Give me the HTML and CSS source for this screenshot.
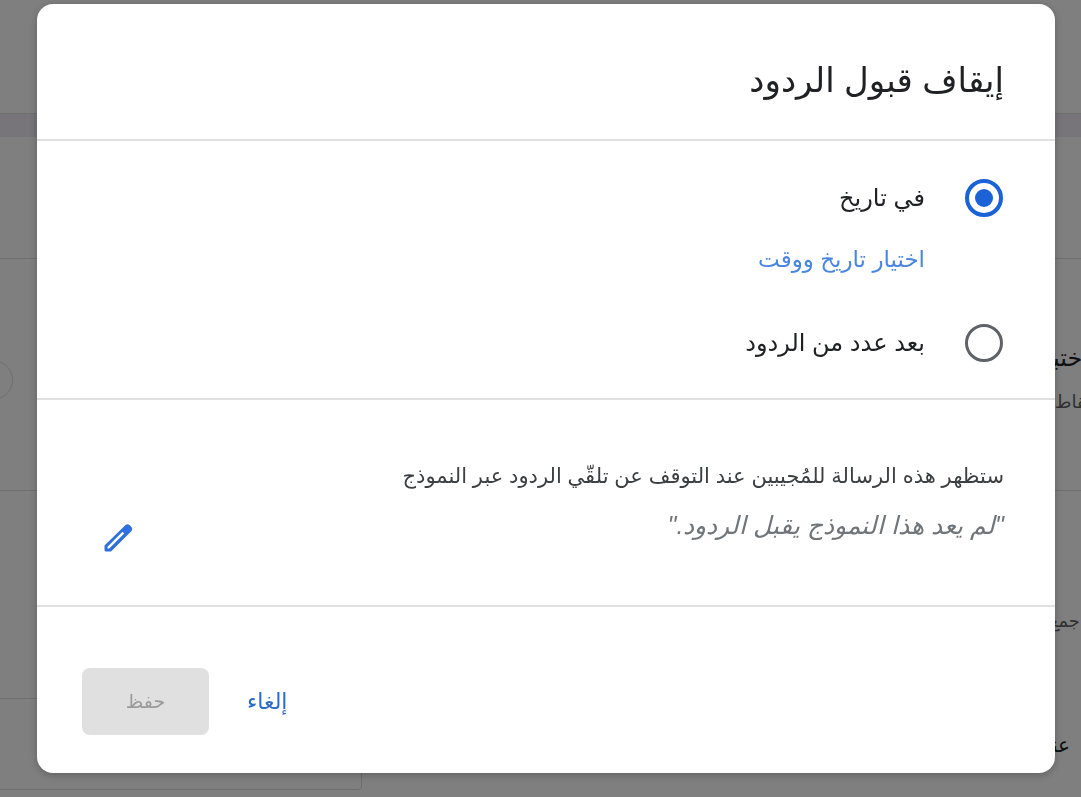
FILE: index.html
```html
<!DOCTYPE html>
<html lang="ar" dir="rtl">
  <head>
    <meta charset="UTF-8" />
    <title>إيقاف قبول الردود</title>
    <link rel="stylesheet" href="styles.css">
  </head>
  <body>
    <div class="page">
      <div class="page-top"></div>
      <div class="page-band"></div>
      <div class="page-section page-section-a"></div>
      <div class="page-section page-section-b">
        <div>
          <div class="page-label">اختبار</div>
          <div class="page-sub">نقاط</div>
        </div>
        <span class="page-circle"></span>
      </div>
      <div class="page-section page-section-c">
        <div class="page-sub">جمع</div>
      </div>
      <div class="page-section-d">
        <div class="page-title">عنوان</div>
        <div class="page-box"></div>
      </div>
    </div>

    <div class="overlay"></div>

    <div class="dialog" role="dialog">
      <div class="dialog-head">إيقاف قبول الردود</div>

      <div class="dialog-options">
        <div class="option">
          <span class="radio radio-on"></span>
          <span>في تاريخ</span>
        </div>
        <a class="pick-link">اختيار تاريخ ووقت</a>
        <div class="option option-last">
          <span class="radio"></span>
          <span>بعد عدد من الردود</span>
        </div>
      </div>

      <div class="dialog-message">
        <div class="message-text">
          <p class="message-note">ستظهر هذه الرسالة للمُجيبين عند التوقف عن تلقّي الردود عبر النموذج</p>
          <p class="message-quote">"لم يعد هذا النموذج يقبل الردود."</p>
        </div>
        <svg class="edit-icon" viewBox="0 0 30 30" width="30" height="30">
          <path fill-rule="evenodd" fill="#2f6fde" d="M3 28.5 Q1.5 28.5 1.5 27 V22.5 L22.5 2 Q24.5 0.5 26.5 2 L28.5 4 Q30 6 28.5 8 L8 28.5 Z M4.5 23.8 V25.5 H6.2 L21.2 10.5 L19.5 8.8 Z"/>
        </svg>
      </div>

      <div class="dialog-actions">
        <a class="cancel-btn">إلغاء</a>
        <button class="save-btn" disabled>حفظ</button>
      </div>
    </div>
  </body>
</html>
```

FILE: styles.css
```css
* {
  box-sizing: border-box;
}

html,
body {
  margin: 0;
  height: 100%;
  overflow: hidden;
}

body {
  font-family: 'Liberation Sans', 'DejaVu Sans', sans-serif;
  color: #202124;
  background-color: #fff;
}

.page {
  height: 797px;
  overflow: hidden;
}

.page-top {
  height: 113px;
}

.page-band {
  height: 24px;
  background-color: #eeeaf2;
  border-top: 1px solid #ddd;
}

.page-section {
  border-bottom: 1px solid #ddd;
}

.page-section-a {
  height: 122px;
}

.page-section-b {
  height: 232px;
  padding-top: 86px;
  display: flex;
  justify-content: space-between;
  align-items: flex-start;
}

.page-section-c {
  height: 207px;
  padding-top: 120px;
  border-bottom: none;
}

.page-section-d {
  height: 100px;
  display: flex;
  justify-content: space-between;
  align-items: flex-start;
}

.page-label {
  margin-right: -8px;
  font-size: 24px;
  line-height: 26px;
}

.page-sub {
  margin-top: 21px;
  margin-right: -10px;
  font-size: 18px;
  line-height: 20px;
  color: #5f6368;
}

.page-section-c .page-sub {
  margin: 0 1px 0 0;
}

.page-title {
  margin: 35px 11px 0 0;
  font-size: 20px;
  line-height: 24px;
}

.page-circle {
  width: 40px;
  height: 40px;
  margin: 15px 0 0 -27px;
  border: 1px solid #ddd;
  border-radius: 50%;
}

.page-box {
  width: 370px;
  height: 92px;
  margin-left: -8px;
  border: 1px solid #ddd;
  border-radius: 4px;
}

.overlay {
  position: fixed;
  top: 0;
  left: 0;
  right: 0;
  bottom: 0;
  background: rgba(0, 0, 0, 0.5);
}

.dialog {
  position: fixed;
  top: 4px;
  left: 37px;
  width: 1018px;
  height: 769px;
  background: white;
  border-radius: 16px;
  box-shadow: 0 2px 8px rgba(0, 0, 0, 0.25);
  display: flex;
  flex-direction: column;
}

.dialog-head {
  height: 137px;
  padding: 56px 51px 0;
  font-size: 34px;
  line-height: 40px;
  border-bottom: 2px solid #e0e0e0;
}

.dialog-options {
  height: 259px;
  padding: 38px 52px 0;
  border-bottom: 2px solid #e0e0e0;
  font-size: 24px;
}

.option {
  display: flex;
  align-items: center;
  gap: 40px;
  height: 38px;
}

.option-last {
  margin-top: 51px;
}

.radio {
  width: 38px;
  height: 38px;
  border: 3px solid #5f6368;
  border-radius: 50%;
  display: flex;
  justify-content: center;
  align-items: center;
}

.radio-on {
  border: 4px solid #1a62d6;
}

.radio-on::after {
  content: '';
  width: 18px;
  height: 18px;
  border-radius: 50%;
  background-color: #1a62d6;
}

.pick-link {
  display: block;
  margin: 28px 78px 0 0;
  font-size: 23px;
  line-height: 28px;
  color: #4a86e0;
}

.dialog-message {
  height: 207px;
  padding: 0 51px 0 66px;
  border-bottom: 2px solid #e0e0e0;
  display: flex;
  justify-content: space-between;
}

.message-text p {
  margin: 0;
}

.message-text .message-note {
  padding-top: 62px;
  font-size: 21px;
  line-height: 28px;
  color: #3c4043;
}

.message-text .message-quote {
  margin-top: 20px;
  font-size: 25px;
  line-height: 30px;
  font-style: italic;
  color: #70757a;
}

.edit-icon {
  margin-top: 123px;
}

.dialog-actions {
  flex: 1;
  display: flex;
  align-items: flex-start;
  justify-content: flex-end;
  padding: 61px 45px 0;
  gap: 38px;
}

.cancel-btn {
  color: #2a6bc9;
  font-size: 22px;
  line-height: 67px;
}

.save-btn {
  width: 127px;
  height: 67px;
  border: none;
  border-radius: 8px;
  background-color: #e0e0e0;
  color: #9a9a9a;
  font-family: inherit;
  font-size: 19px;
}
```
